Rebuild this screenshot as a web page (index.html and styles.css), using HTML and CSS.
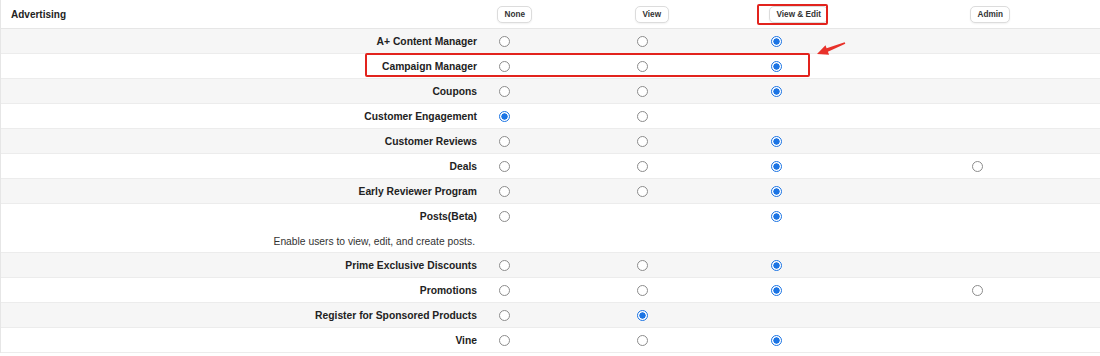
FILE: index.html
```html
<!DOCTYPE html>
<html lang="en">
<head>
  <meta charset="UTF-8"/>
  <title>User Permissions - Advertising</title>
  <link rel="stylesheet" href="styles.css">
</head>
<body>

  <div class="perm-table">
    <div class="row head">
      <div class="group-title">Advertising</div>
      <div><button class="level-btn">None</button></div>
      <div><button class="level-btn">View</button></div>
      <div><button class="level-btn">View &amp; Edit</button></div>
      <div><button class="level-btn">Admin</button></div>
    </div>

    <div class="row alt">
      <div class="label">A+ Content Manager</div>
      <div><input type="radio" name="aplus"></div>
      <div><input type="radio" name="aplus"></div>
      <div><input type="radio" name="aplus" checked></div>
      <div></div>
    </div>

    <div class="row">
      <div class="label">Campaign Manager</div>
      <div><input type="radio" name="campaign"></div>
      <div><input type="radio" name="campaign"></div>
      <div><input type="radio" name="campaign" checked></div>
      <div></div>
    </div>

    <div class="row alt">
      <div class="label">Coupons</div>
      <div><input type="radio" name="coupons"></div>
      <div><input type="radio" name="coupons"></div>
      <div><input type="radio" name="coupons" checked></div>
      <div></div>
    </div>

    <div class="row">
      <div class="label">Customer Engagement</div>
      <div><input type="radio" name="engagement" checked></div>
      <div><input type="radio" name="engagement"></div>
      <div></div>
      <div></div>
    </div>

    <div class="row alt">
      <div class="label">Customer Reviews</div>
      <div><input type="radio" name="reviews"></div>
      <div><input type="radio" name="reviews"></div>
      <div><input type="radio" name="reviews" checked></div>
      <div></div>
    </div>

    <div class="row">
      <div class="label">Deals</div>
      <div><input type="radio" name="deals"></div>
      <div><input type="radio" name="deals"></div>
      <div><input type="radio" name="deals" checked></div>
      <div><input type="radio" name="deals"></div>
    </div>

    <div class="row alt">
      <div class="label">Early Reviewer Program</div>
      <div><input type="radio" name="early"></div>
      <div><input type="radio" name="early"></div>
      <div><input type="radio" name="early" checked></div>
      <div></div>
    </div>

    <div class="row tall">
      <div class="label">Posts(Beta)</div>
      <div><input type="radio" name="posts"></div>
      <div></div>
      <div><input type="radio" name="posts" checked></div>
      <div></div>
      <div class="desc">Enable users to view, edit, and create posts.</div>
    </div>

    <div class="row alt">
      <div class="label">Prime Exclusive Discounts</div>
      <div><input type="radio" name="prime"></div>
      <div><input type="radio" name="prime"></div>
      <div><input type="radio" name="prime" checked></div>
      <div></div>
    </div>

    <div class="row">
      <div class="label">Promotions</div>
      <div><input type="radio" name="promos"></div>
      <div><input type="radio" name="promos"></div>
      <div><input type="radio" name="promos" checked></div>
      <div><input type="radio" name="promos"></div>
    </div>

    <div class="row alt">
      <div class="label">Register for Sponsored Products</div>
      <div><input type="radio" name="sponsored"></div>
      <div><input type="radio" name="sponsored" checked></div>
      <div></div>
      <div></div>
    </div>

    <div class="row">
      <div class="label">Vine</div>
      <div><input type="radio" name="vine"></div>
      <div><input type="radio" name="vine"></div>
      <div><input type="radio" name="vine" checked></div>
      <div></div>
    </div>
  </div>

  <!-- annotations drawn over the screenshot -->
  <div class="mark mark-head"></div>
  <div class="mark mark-row"></div>
  <svg class="arrow" width="40" height="20" viewBox="810 40 40 20">
    <polygon fill="#e8312a" points="817,54 825.5,45.3 826.6,48.3 844.7,42.3 845.3,43.7 827.9,51.7 829.1,54.7"/>
  </svg>

</body>
</html>
```

FILE: styles.css
```css
* {
  box-sizing: border-box;
  margin: 0;
  padding: 0;
}

body {
  font-family: "Liberation Sans", Arial, sans-serif;
  background: #fff;
  color: #222;
  width: 1100px;
  position: relative;
}

.perm-table {
  border-left: 1px solid #e6e6e6;
}

.row {
  display: grid;
  grid-template-columns: 496px 138px 134px 201px 1fr;
  align-items: center;
  height: 25px;
  border-bottom: 1px solid #ececec;
  background: #fff;
}

.row.alt {
  background: #f6f6f6;
}

.row.head {
  height: 29px;
  border-bottom: 1px solid #e6e6e6;
}

.row.tall {
  height: 49px;
  grid-template-rows: 25px 24px;
}

.group-title {
  padding-left: 10px;
  font-size: 10px;
  font-weight: bold;
  color: #222;
}

.label {
  text-align: right;
  padding-right: 20px;
  font-size: 10.3px;
  font-weight: bold;
  color: #222;
}

.desc {
  grid-column: 1;
  text-align: right;
  padding-right: 22px;
  font-size: 10.3px;
  color: #333;
}

.level-btn {
  display: block;
  height: 17px;
  margin-top: 1px;
  padding: 0 6.5px;
  font-family: inherit;
  font-size: 8.2px;
  font-weight: bold;
  color: #333;
  background: #fff;
  border: 1px solid #dcdcdc;
  border-radius: 5px;
  box-shadow: 0 1px 2px rgba(0,0,0,0.06);
}

input[type="radio"] {
  appearance: none;
  -webkit-appearance: none;
  display: block;
  width: 11px;
  height: 11px;
  margin-left: 1.5px;
  border: 1px solid #8c8c8c;
  border-radius: 50%;
  background: #fff;
}

input[type="radio"]:checked {
  border-color: #1b74e4;
  background: radial-gradient(circle, #1b74e4 0 2.9px, #fff 3.4px);
}

.mark {
  position: absolute;
  border: 2px solid #e2231d;
  border-radius: 2px;
}

.mark-head {
  left: 757px;
  top: 4px;
  width: 71px;
  height: 21px;
}

.mark-row {
  left: 365px;
  top: 53px;
  width: 445px;
  height: 24px;
}

.arrow {
  position: absolute;
  left: 810px;
  top: 40px;
}
```
